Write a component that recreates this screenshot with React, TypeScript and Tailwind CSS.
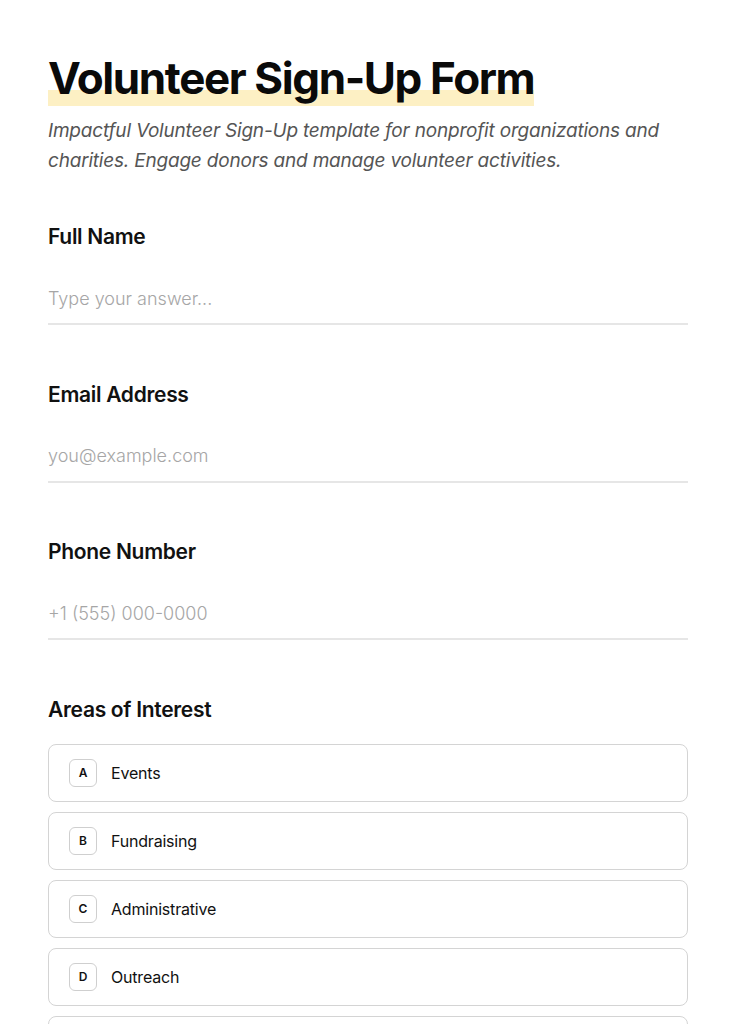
import React from "react";

const font = { fontFamily: "Inter, 'Noto Sans', sans-serif" };

function TextField({ label, placeholder }: { label: string; placeholder: string }) {
  return (
    <div className="flex flex-col">
      <label className="text-[21px] font-semibold text-[#111] leading-[28px] tracking-[-0.3px]">{label}</label>
      <input
        className="mt-[31px] h-[43px] border-b-2 border-[#e6e6e6] bg-transparent pb-[9px] text-[18px] text-[#111] outline-none placeholder:text-[#a6a6a6] placeholder:font-light"
        placeholder={placeholder}
        style={font}
      />
    </div>
  );
}

const options = [
  ["A", "Events"],
  ["B", "Fundraising"],
  ["C", "Administrative"],
  ["D", "Outreach"],
  ["E", "Other"],
];

export default function App() {
  return (
    <div className="min-h-screen bg-white" style={font}>
      <div className="px-[48px] pt-[52px]">
        <h1 className="inline-block pb-[2px] text-[44px] font-bold leading-[52px] tracking-[-1.4px] text-[#0a0a0a] bg-[linear-gradient(transparent_70%,#fdf0c4_70%)]">
          Volunteer Sign-Up Form
        </h1>
        <p className="mt-[10px] text-[19px] italic leading-[30px] text-[#555] tracking-[-0.2px]">
          Impactful Volunteer Sign-Up template for nonprofit organizations and charities. Engage donors and manage volunteer activities.
        </p>
        <div className="mt-[47px] flex flex-col gap-[55.5px]">
          <TextField label="Full Name" placeholder="Type your answer..." />
          <TextField label="Email Address" placeholder="you@example.com" />
          <TextField label="Phone Number" placeholder="+1 (555) 000-0000" />
          <div className="flex flex-col">
            <label className="text-[21px] font-semibold text-[#111] leading-[28px] tracking-[-0.3px]">Areas of Interest</label>
            <div className="mt-[20px] flex flex-col gap-[10px]">
              {options.map(([k, v]) => (
                <button
                  key={k}
                  className="flex h-[58px] items-center gap-[14px] rounded-[8px] border border-[#d4d4d4] bg-white px-[20px] text-left"
                >
                  <span className="flex h-[28px] w-[28px] items-center justify-center rounded-[6px] border border-[#cfcfcf] text-[12px] font-semibold text-[#111]">
                    {k}
                  </span>
                  <span className="text-[16px] tracking-[-0.2px] text-[#111]">{v}</span>
                </button>
              ))}
            </div>
          </div>
        </div>
      </div>
    </div>
  );
}
